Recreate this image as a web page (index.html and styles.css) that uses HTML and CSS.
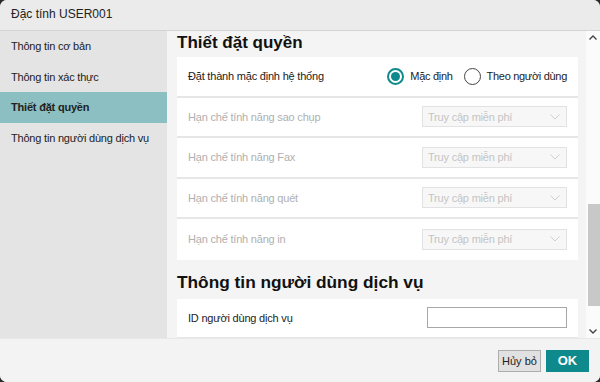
FILE: index.html
```html
<!DOCTYPE html>
<html lang="vi">
<head>
    <meta charset="UTF-8">
    <meta name="viewport" content="width=device-width, initial-scale=1.0">
    <title>Đặc tính USER001</title>
    <link rel="stylesheet" href="styles.css">
</head>
<body>
    <div class="dialog">
        <div class="dialog-header">Đặc tính USER001</div>

        <div class="dialog-body">
            <!-- menu bên trái -->
            <ul class="side-menu">
                <li>Thông tin cơ bản</li>
                <li>Thông tin xác thực</li>
                <li class="active">Thiết đặt quyền</li>
                <li>Thông tin người dùng dịch vụ</li>
            </ul>

            <div class="content">
                <h2 class="section-title">Thiết đặt quyền</h2>
                <div class="card">
                    <div class="row">
                        <span class="row-label">Đặt thành mặc định hệ thống</span>
                        <div class="radios">
                            <label class="radio checked"><span class="dot"></span>Mặc định</label>
                            <label class="radio"><span class="dot"></span>Theo người dùng</label>
                        </div>
                    </div>
                    <div class="row disabled">
                        <span class="row-label">Hạn chế tính năng sao chụp</span>
                        <div class="select">Truy cập miễn phí<svg width="10" height="6" viewBox="0 0 10 6"><path d="M0.5 0.5 L5 5 L9.5 0.5" fill="none" stroke="#cfcfcf" stroke-width="1"/></svg></div>
                    </div>
                    <div class="row disabled">
                        <span class="row-label">Hạn chế tính năng Fax</span>
                        <div class="select">Truy cập miễn phí<svg width="10" height="6" viewBox="0 0 10 6"><path d="M0.5 0.5 L5 5 L9.5 0.5" fill="none" stroke="#cfcfcf" stroke-width="1"/></svg></div>
                    </div>
                    <div class="row disabled">
                        <span class="row-label">Hạn chế tính năng quét</span>
                        <div class="select">Truy cập miễn phí<svg width="10" height="6" viewBox="0 0 10 6"><path d="M0.5 0.5 L5 5 L9.5 0.5" fill="none" stroke="#cfcfcf" stroke-width="1"/></svg></div>
                    </div>
                    <div class="row disabled last">
                        <span class="row-label">Hạn chế tính năng in</span>
                        <div class="select">Truy cập miễn phí<svg width="10" height="6" viewBox="0 0 10 6"><path d="M0.5 0.5 L5 5 L9.5 0.5" fill="none" stroke="#cfcfcf" stroke-width="1"/></svg></div>
                    </div>
                </div>

                <h2 class="section-title second">Thông tin người dùng dịch vụ</h2>
                <div class="card">
                    <div class="row">
                        <span class="row-label">ID người dùng dịch vụ</span>
                        <input type="text" class="text-input">
                    </div>
                </div>
            </div>

            <!-- thanh cuộn -->
            <div class="scrollbar">
                <svg width="8" height="5" viewBox="0 0 8 5"><path d="M0.5 4.5 L4 1 L7.5 4.5" fill="none" stroke="#444" stroke-width="1.4"/></svg>
                <div class="track"><div class="thumb"></div></div>
                <svg width="8" height="5" viewBox="0 0 8 5"><path d="M0.5 0.5 L4 4 L7.5 0.5" fill="none" stroke="#444" stroke-width="1.4"/></svg>
            </div>
        </div>

        <div class="dialog-footer">
            <button class="btn">Hủy bỏ</button>
            <button class="btn btn-ok">OK</button>
        </div>
    </div>
</body>
</html>
```

FILE: styles.css
```css
:root {
    --teal: #0f8a8c;
    --active-bg: #8bbfc2;
    --text: #222;
    --muted: #b0b0b0;
}

* { box-sizing: border-box; }

body {
    margin: 0;
    background: #2a2a2a;
    font-family: 'Liberation Sans', Arial, sans-serif;
    color: var(--text);
}

.dialog {
    width: 600px;
    height: 382px;
    background: #f4f4f4;
    border-radius: 7px;
    overflow: hidden;
    display: flex;
    flex-direction: column;
}

.dialog-header {
    height: 31px;
    flex: none;
    padding: 0 11px;
    line-height: 29px;
    font-size: 12px;
    background: #ebebeb;
    border-bottom: 1px solid #d4d4d4;
}

.dialog-body {
    flex: 1;
    display: flex;
    overflow: hidden;
}

.side-menu {
    list-style: none;
    margin: 0;
    padding: 0;
    width: 167px;
    flex: none;
    background: #e4e4e4;
    font-size: 11px;
    letter-spacing: -0.2px;
}

.side-menu li {
    height: 30.5px;
    line-height: 30px;
    padding-left: 11px;
    white-space: nowrap;
    color: #222;
}

.side-menu li.active {
    background: var(--active-bg);
    font-weight: bold;
}

.content {
    width: 411px;
    flex: none;
    padding-left: 10px;
}

.section-title {
    margin: 0;
    height: 26px;
    line-height: 24px;
    font-size: 17px;
    font-weight: bold;
    color: #111;
}

.section-title.second {
    height: 39px;
    line-height: 44px;
    font-size: 17.3px;
}

.card {
    background: #fff;
}

.row {
    height: 40.5px;
    display: flex;
    align-items: center;
    justify-content: space-between;
    padding: 0 11px;
    border-bottom: 2px solid #e6e6e6;
    font-size: 11px;
    letter-spacing: -0.2px;
}

.row.last { border-bottom: none; }

.row.disabled .row-label { color: var(--muted); }

.radios {
    display: flex;
    gap: 11px;
}

.radio {
    display: flex;
    align-items: center;
    gap: 6px;
    font-size: 11px;
    letter-spacing: -0.3px;
}

.dot {
    width: 17px;
    height: 17px;
    border-radius: 50%;
    border: 1.5px solid #444;
    background: #fff;
    position: relative;
}

.radio.checked .dot {
    border: 2px solid var(--teal);
}

.radio.checked .dot::after {
    content: "";
    position: absolute;
    left: 2px;
    top: 2px;
    width: 9px;
    height: 9px;
    border-radius: 50%;
    background: var(--teal);
}

.select {
    width: 145px;
    height: 21px;
    display: flex;
    align-items: center;
    justify-content: space-between;
    padding: 0 6px 0 5px;
    background: #f7f7f7;
    border: 1px solid #e2e2e2;
    color: #c4c4c4;
    font-size: 11px;
}

.text-input {
    width: 140px;
    height: 21px;
    border: 1px solid #a8a8a8;
    background: #fff;
    margin-right: 0;
}

.scrollbar {
    width: 14px;
    margin-left: 8px;
    flex: none;
    background: #fbfbfb;
    display: flex;
    flex-direction: column;
    align-items: center;
    padding: 4px 0 4px 0;
}

.track {
    flex: 1;
    width: 100%;
    padding: 164px 0 23px 2px;
}

.thumb {
    height: 100%;
    background: #c8c8c8;
}

.dialog-footer {
    height: 44px;
    flex: none;
    display: flex;
    justify-content: flex-end;
    align-items: center;
    gap: 5px;
    padding: 0 11px 0 0;
    background: #f3f3f3;
    border-top: 1px solid #e8e8e8;
}

.btn {
    width: 43px;
    height: 22px;
    padding: 0;
    font-family: 'Liberation Sans', Arial, sans-serif;
    font-size: 11px;
    background: #e1e1e1;
    border: 1px solid #adadad;
    color: #222;
}

.btn-ok {
    background: var(--teal);
    border-color: var(--teal);
    color: #fff;
    font-weight: bold;
    font-size: 13px;
}
```
